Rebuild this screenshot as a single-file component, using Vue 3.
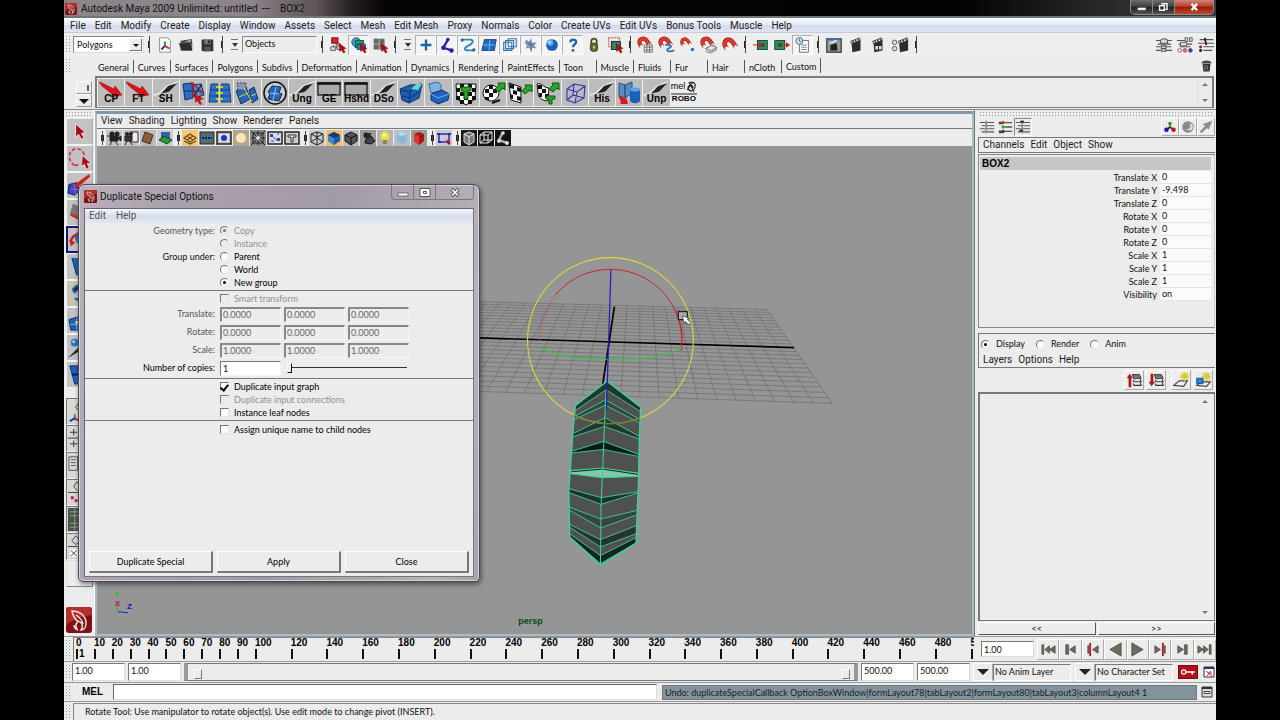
<script setup>
import { ref } from 'vue'

const menus = ['File', 'Edit', 'Modify', 'Create', 'Display', 'Window', 'Assets', 'Select', 'Mesh', 'Edit Mesh', 'Proxy', 'Normals', 'Color', 'Create UVs', 'Edit UVs', 'Bonus Tools', 'Muscle', 'Help']
const shelfTabs = ['General', 'Curves', 'Surfaces', 'Polygons', 'Subdivs', 'Deformation', 'Animation', 'Dynamics', 'Rendering', 'PaintEffects', 'Toon', 'Muscle', 'Fluids', 'Fur', 'Hair', 'nCloth', 'Custom']
const panelMenus = ['View', 'Shading', 'Lighting', 'Show', 'Renderer', 'Panels']
const channelMenus = ['Channels', 'Edit', 'Object', 'Show']
const layerMenus = ['Layers', 'Options', 'Help']

const arrow = '<path d="M11 8l8 6-3 .5 2 3.500-2 1-2-3.500-2 2z" fill="#b00c12" stroke="#7a0000" stroke-width=".4"/>'
const magnet = '<path d="M5 12C1 7 3 3.500 6 3C9.500 2.500 11 5 14.500 10.500" fill="none" stroke="#8a120a" stroke-width="4.600"/><path d="M5 12C1 7 3 3.500 6 3C9.500 2.500 11 5 14.500 10.500" fill="none" stroke="#dc3a26" stroke-width="3.400"/><path d="M5.500 12.500L4 10.300M14.700 11L13.300 8.800" stroke="#f0f0f0" stroke-width="3.400"/>'
const clapper = '<path d="M5 8l10-3v11l-9 2z" fill="#2b2b2b"/><path d="M4 6l10-4 1 3L5 8.500z" fill="#eee" stroke="#222" stroke-width=".8"/><path d="M6 5l1.500 2.500M9 4l1.500 2.500M12 3l1.500 2.500" stroke="#222" stroke-width="1.300"/>'
const pageBend = '<path d="M1 16C9 14 13 8 15 6c3-2 6-3 10-3-5 3-6 7-10 9-3 1-7 0-14 4z" fill="#222"/><path d="M0 14C8 14 10 7 15 5l10-4v2L15 6C11 9 9 15 1 16z" fill="#e4e4e4"/>'
const boxFrame = '<rect x="2" y="3" width="22" height="12" fill="#a9a9a9" stroke="#111" stroke-width="1.200"/><path d="M1.300 3.500h23.400" stroke="#111" stroke-width="2.500"/>'
const redArrow = '<path d="M1 2l3 1 12 6 1-3 7 9-11 2 1-3L4 6z" fill="#e01018" stroke="#8c0006" stroke-width=".5"/>'
const checker = (x, y, n, s) => {
  let d = ''
  for (let r = 0; r < n; r++) for (let c = 0; c < n; c++) if ((r + c) % 2) d += `M${x + c * s} ${y + r * s}h${s}v${s}h-${s}z`
  return d
}
const logo = '<rect width="26" height="26" rx="3" fill="#7d1114"/><path d="M0 3a3 3 0 0 1 3-3h20a3 3 0 0 1 3 3v5C16 9 8 12 0 18z" fill="#b0302c"/><path d="M6 4c9 0 14 6 14 12 0 4-2 7-5 7 3-4 1-8-3-9-3-1-5-5-6-10zM10 8c3 2 6 4 7 9M12 15c-2 1-3 3-1 7M8 18c0 2 1 4 4 5" fill="none" stroke="#f2dede" stroke-width="1.500"/>'

const status = {
  newScene: '<path d="M4 2h9l3 3v13H4z" fill="#fff" stroke="#888"/><path d="M10 11V6" stroke="#1ca01c" stroke-width="2"/><path d="M10 11l-4 4" stroke="#2222d0" stroke-width="2"/><path d="M10 11l5 3" stroke="#d02020" stroke-width="2"/>',
  open: '<path d="M4 16V6l5-1 1 1h7v10z" fill="#555"/><path d="M2 8l12 0 3 8H5z" fill="#2e2e2e"/><path d="M4 6l12-2v3" fill="none" stroke="#222"/>',
  save: '<path d="M4 4h13v13H5l-1-1z" fill="#333"/><path d="M7 4h7v5H7z" fill="#777"/><path d="M7 12h7v5H7z" fill="#555"/><path d="M11 5h2v3h-2z" fill="#222"/>',
  hier: '<path d="M8 6v8M8 9h5M5 10v5" stroke="#555" fill="none"/><rect x="3" y="2" width="7" height="6" fill="#d22" stroke="#611"/><rect x="2" y="12" width="5" height="4" fill="#ddd" stroke="#555"/><rect x="9" y="11" width="5" height="4" fill="#ddd" stroke="#555"/>' + arrow,
  obj: '<circle cx="7" cy="7" r="5" fill="#3c9ad6" stroke="#174e84"/><rect x="6" y="5" width="9" height="8" fill="#20a050" stroke="#0b5e35"/><path d="M8 9h9v6H8z" fill="#2d80d0" stroke="#123f80"/>' + arrow,
  comp: '<rect x="3" y="3" width="12" height="12" fill="#666"/><path d="M9 3v12M3 9h12" stroke="#b9b9b9"/><rect x="10" y="9.500" width="4.500" height="5" fill="#3a8a4a"/>' + arrow,
  plus: '<path d="M10 4v12M4 10h12" stroke="#1c64a8" stroke-width="2.600"/>',
  joint: '<path d="M11 4L6 13l9 3" fill="none" stroke="#2522a0" stroke-width="2.500"/><circle cx="11" cy="4" r="2" fill="#2522a0"/><circle cx="6" cy="13" r="2.500" fill="#2522a0"/><circle cx="15" cy="16" r="2.500" fill="#2522a0"/>',
  curve: '<path d="M3 4h9c6 0 3 5-2 7-4 2-6 5 1 5h6" fill="none" stroke="#3a82b8" stroke-width="2"/><path d="M2 3h3v3H2zM15 14h3v3h-3z" fill="#1f5c94"/>',
  surf: '<path d="M5 4h13l-2 12H2z" fill="#1e6cc0" stroke="#10407c"/><path d="M11 4l-1 12M3.500 10H17" stroke="#7db8ee"/>',
  lattice: '<path d="M3 7h9v9H3zM8 3h9v9H8zM5 5h9v9H5z" fill="none" stroke="#2f76b4" stroke-width="1.200"/>',
  part: '<path d="M5 4l2 3 3-3 1 4 5-2-3 4 3 3-5 0v5l-3-5-4 1 2-4-3-3z" fill="#7897b8"/><path d="M10 3v14M4 9h12M6 5l8 9" stroke="#47668c" stroke-width=".8"/>',
  ball: '<circle cx="10" cy="10" r="6.500" fill="#1560b4"/><circle cx="8" cy="7.500" r="3.500" fill="#58a6ee"/><circle cx="7.500" cy="7" r="1.500" fill="#c4e2ff"/>',
  ques: '<path d="M7 7c0-4 7-4 6.500 0C13 9.500 10 9 10 12.500" fill="none" stroke="#1c64a8" stroke-width="2.500"/><circle cx="10" cy="16" r="1.600" fill="#1c64a8"/>',
  lock: '<path d="M7 9V6c0-4 6-4 6 0v3" fill="none" stroke="#4a4a20" stroke-width="2"/><rect x="6" y="8" width="8" height="9" rx="3" fill="#6d6b2e" stroke="#2e2d10"/><path d="M10 11v3" stroke="#eee" stroke-width="1.500"/>',
  hilite: '<rect x="3" y="2" width="12" height="10" fill="none" stroke="#d22" stroke-dasharray="2 1"/><rect x="6" y="6" width="10" height="9" fill="#2d8a4a" stroke="#112244"/><path d="M9 8h5v4H9z" fill="#3a80c0"/>' + arrow,
  mgrid: magnet + '<path d="M8 10h9v8H8zM11 10v8M14 10v8M8 12.500h9M8 15.500h9" fill="#eee" stroke="#555" stroke-width=".8"/>',
  mcurve: magnet + '<path d="M8 10c9-1 7 3 3 4-3 3 2 4 7 2" fill="none" stroke="#2a76bd" stroke-width="2"/>',
  mpoint: '<g transform="translate(1 1) scale(.8)">' + magnet + '</g><circle cx="15" cy="15" r="2" fill="#2a76bd"/>',
  mplane: magnet + '<path d="M6 14l7-4 6 3-7 4z" fill="#ddd" stroke="#555"/><path d="M6 17l6 2 7-4" fill="none" stroke="#777"/>',
  mlive: '<g transform="translate(1 1) scale(1.1)">' + magnet + '</g>',
  inp: '<rect x="6" y="5" width="11" height="10" fill="#2c9257" stroke="#12402a"/><path d="M9 8h5v4H9z" fill="#444"/><path d="M1 10h9M8 8l3 2-3 2z" stroke="#c8202a" fill="#c8202a" stroke-width="1.200"/>',
  outp: '<rect x="2" y="5" width="11" height="10" fill="#2c9257" stroke="#12402a"/><path d="M5 8h5v4H5z" fill="#444"/><path d="M9 10h8M15 8l3 2-3 2z" stroke="#c8202a" fill="#c8202a" stroke-width="1.200"/>',
  hist: '<path d="M8 5h8v13H6v-9" fill="#fff" stroke="#666"/><path d="M8 10h6M8 12.500h6M8 15h6" stroke="#777"/><circle cx="6" cy="5.500" r="3.800" fill="#d8ecfa" stroke="#2a5f92"/><path d="M6 3v3h2" fill="none" stroke="#2a5f92"/>',
  rview: '<rect x="2" y="3" width="16" height="15" fill="#9a9a9a" stroke="#444" stroke-width="1.500"/><path d="M2 3.500h16" stroke="#3d6fa8" stroke-width="2.500"/><path d="M6 10l7-2 1 8H6z" fill="#222"/><path d="M5 8l8-3" stroke="#eee" stroke-width="1.500"/>',
  render: clapper,
  ipr: clapper + '<path d="M7 11h3v4H7zM11 11h3v4h-3z" fill="#ddd"/>',
  rset: '<g transform="translate(4 0)">' + clapper + '</g><circle cx="4" cy="7" r="2.500" fill="#ddd" stroke="#555"/><circle cx="4" cy="14" r="2.500" fill="#ddd" stroke="#555"/>',
  sl1: '<path d="M1 5h5M13 5h6M3 9h15M1 12h5M12 12h6M1 16h5M12 16h7" stroke="#555" stroke-width="1.200"/><path d="M6 8V6c0-4 8-4 8 0v2zM7 11h5v6H7zM7 14h5" fill="#ddd" stroke="#555" stroke-width="1.200"/>',
  sl2: '<path d="M1 5h11M3 9h15M4 12h12" stroke="#555" stroke-width="1.200"/><path d="M10 2h3v4h-3zM15 2h3v4h-3zM5 7h7v4H5z" fill="#ddd" stroke="#555"/><circle cx="4" cy="16" r="2" fill="#fff" stroke="#c33"/><circle cx="10" cy="16" r="2" fill="#d77" stroke="#955"/><circle cx="16" cy="16" r="2" fill="#44a" stroke="#336"/>',
  sl3: '<path d="M3 4h15M1 8h8M11 8h8M7 12h12M7 16h10" stroke="#555" stroke-width="1.200"/><path d="M9 2v4M10 6v4" stroke="#222" stroke-width="2"/><circle cx="4" cy="12" r="1.700" fill="#a22"/><circle cx="4" cy="16" r="1.700" fill="#226"/>',
}
const files = ['newScene', 'open', 'save']
const selModes = ['hier', 'obj', 'comp']
const masks = ['plus', 'joint', 'curve', 'surf', 'lattice', 'part', 'ball', 'ques']
const snaps = ['mgrid', 'mcurve', 'mpoint', 'mplane', 'mlive']
const hists = ['inp', 'outp', 'hist']
const renders = ['rview', 'render', 'ipr', 'rset']
const sliders = ['sl1', 'sl2', 'sl3']

const shelf = [
  { g: redArrow, t: 'CP' },
  { g: redArrow, t: 'FT' },
  { g: pageBend, t: 'SH' },
  { g: '<path d="M3 4l9-1 1 15-8 2z" fill="#2a6fc4" stroke="#0d2f6b"/><path d="M13 5l8-1 3 11-9 3z" fill="#5793cc" stroke="#0d2f6b"/><path d="M4 11h19" stroke="#0d2f6b"/><path d="M12 2l1 15M13 3l9 11" stroke="#c11" stroke-width="1.300"/><path d="M22 4l-8 12" stroke="#123" stroke-width="1.200"/><path d="M15 14l9 5-4 1 2 4-2 1-3-4-2 2z" fill="#c8171e"/>' },
  { g: '<path d="M4 4h7l-1 18H2zM14 4h8l2 18H14z" fill="#2d74c8" stroke="#12427f"/><path d="M3 10h20M3 16h20" stroke="#0e3a78"/><path d="M12.500 3v20M9 7h7M9 13h7M9 19h7" stroke="#e8e44a" stroke-width="1.500"/>' },
  { g: '<path d="M2 11l10-4 4 12-9 5z" fill="#2465b8" stroke="#0d2f6b"/><path d="M15 10l5-3 4 12-6 4z" fill="#2465b8" stroke="#0d2f6b"/><path d="M3 3h9v7H4z" fill="#8d98b8" stroke="#445" stroke-dasharray="2 1"/><path d="M5 17l9-4M17 16l5-2M10 8l8 14" stroke="#d8d84a"/>' },
  { g: '<circle cx="13" cy="13" r="11" fill="#c9c9c9" stroke="#111" stroke-width="1.500"/><path d="M10 6l9 1-2 6 3 1-3 7-11-2 2-6-2-1z" fill="#2465b8" stroke="#0d2f6b"/><path d="M8 13l9 1M14 7l-3 13" stroke="#9cc4f0"/>' },
  { g: pageBend, t: 'Ung' },
  { g: boxFrame, t: 'GE' },
  { g: boxFrame, t: 'Hshd' },
  { g: pageBend, t: 'DSo' },
  { g: '<path d="M2 9l10-4 12-1-3 14-10 5-7-3z" fill="#1f5db4" stroke="#0d2f6b"/><path d="M3 10l9 2 4-6M11 23l1-11M4 16l8 2 9-6" fill="none" stroke="#0d2f6b"/><path d="M13 9l5-5 6 0-4 6z" fill="#65d6ca"/>' },
  { g: '<path d="M4 4l9-2 3 3v6l-10 2z" fill="#7fb1e2" stroke="#3a6aa4"/><path d="M6 14l11-4 7 4-1 6-10 4-7-4z" fill="#1f62c0" stroke="#0d2f6b"/><path d="M6 14l7 4 11-4" fill="none" stroke="#77aef0"/>' },
  { g: '<path d="M3 4h20l-1 15-9 6-9-6z" fill="#f6f6f6" stroke="#111"/><path d="' + checker(3, 4, 5, 4) + '" fill="#111"/><path d="M8 7h10v4h-3v8h-4v-8H8z" fill="#28a428" stroke="#0b560b"/>' },
  { g: '<circle cx="11" cy="13" r="8" fill="#f6f6f6" stroke="#111"/><path d="M5 9h4v4H5zM9 13h4v4H9zM13 9h4v4h-4zM9 5h4v4H9zM5 17h4v3H5z" fill="#111"/><path d="M15 9l4-4-1-2h7v7l-2-2-4 4z" fill="#28a428" stroke="#0b560b"/><path d="M12 23l8-3" stroke="#111" stroke-width="2"/>' },
  { g: '<path d="M2 3l12 4v16L4 20z" fill="#f6f6f6" stroke="#111"/><path d="M3 4l4 1v4l-4-1zM10 7l4 1v4l-4-1zM6 10l4 1v4l-4-1zM10 16l4 1v4l-4-1zM3 14l3 1v4l-3-1z" fill="#111"/><path d="M15 11l4-4-1-2h7v7l-2-2-5 4z" fill="#28a428" stroke="#0b560b"/>' },
  { g: '<path d="M3 4c5-2 6 4 12 4l-1 13C8 21 4 17 4 13z" fill="#f6f6f6" stroke="#111"/><path d="M4 5h4v4H4zM8 9h4v4H8zM5 13h3v4H5zM11 14h3v4h-3z" fill="#111"/><path d="M15 9l4-4-1-2h7v7l-2-2-4 4zM12 16h9v3h-3v5h-3v-5h-3z" fill="#28a428" stroke="#0b560b"/>' },
  { g: '<path d="M5 9l7-5 11 2-1 12-9 5-8-3zM5 9l10 3 8-6M15 12l-2 11M12 4l-1 11 11 3M11 15l-6 5" fill="none" stroke="#3334b4" stroke-width="1.100"/>' },
  { g: pageBend, t: 'His' },
  { g: '<path d="M3 3l6 2v13l-6-2zM9 5l7-3v11l-7 5z" fill="#5b8cc4" stroke="#24508a"/><path d="M14 9h10v12c-2 3-8 3-10 0z" fill="#1b5fb8"/><ellipse cx="19" cy="9.500" rx="5" ry="2" fill="#5aa0ea"/><path d="M2 15l7 4 1-2 2 7-8 0 1-2z" fill="#d8161c"/>' },
  { g: pageBend, t: 'Unp' },
  { g: '<path d="M18 4c3-4 7-1 6 3-1 5-6 5-7 1 0-3 5-4 5 0M18 2l5 10M16 10l6-8M0 14h26" fill="none" stroke="#222" stroke-width="1.100"/>', t: 'ROBO', top: 'mel' },
]

const panelIcons = [
  'sep',
  '<rect width="16" height="16" fill="#c4c4c4"/><circle cx="6" cy="4" r="2.500" fill="#222"/><circle cx="11" cy="4" r="2.500" fill="#222"/><path d="M4 6h8v5H4zM12 8l3-2v5zM6 11l-2 4M9 11l3 4M1 6h3" stroke="#222" fill="#222"/>',
  '<rect width="16" height="16" fill="#c4c4c4"/><path d="M7 2h8v10H7z" fill="#eee" stroke="#333"/><path d="M2 6h7v5H2zM4 11l-2 4M7 11l2 4" stroke="#222" fill="#333"/><circle cx="4" cy="4" r="2" fill="#222"/><circle cx="8" cy="4" r="2" fill="#222"/>',
  '<rect width="16" height="16" fill="#bbb"/><path d="M5 2l8 3-3 9-8-3z" fill="#8a6038" stroke="#4a3018"/>',
  '<rect width="16" height="16" fill="#ccc"/><path d="M4 2h9v7H4z" fill="#3a5fb0"/><path d="M2 10l5-4 8 4-5 4z" fill="#2a9a3a" stroke="#0b4a14"/>',
  'sep',
  '<rect width="16" height="16" fill="#f4c878"/><path d="M2 8l6-4 6 4-6 4zM5 6l6 4M11 6l-6 4M2 11l6 3 6-3" fill="none" stroke="#6a4310" stroke-width="1.200"/>',
  '<rect x="1" y="2" width="14" height="12" fill="#666" stroke="#222"/><path d="M2 5h12v6H2z" fill="#3a7290"/><path d="M3 8h10" stroke="#123" stroke-dasharray="2 1" stroke-width="2"/>',
  '<rect x="1" y="2" width="14" height="12" fill="#bbb" stroke="#222" stroke-width="1.500"/><path d="M3 4h10v8H3z" fill="#dcdce8"/><circle cx="8" cy="8" r="3" fill="#2036c0"/>',
  '<rect width="16" height="16" fill="#b3a48c"/><circle cx="8" cy="8" r="5" fill="#f8e6ba"/>',
  '<rect width="16" height="16" fill="#8a8a8a"/><path d="M1 1l14 14M15 1L1 15M8 1v14M1 8h14M3 3h10v10H3z" stroke="#222" fill="none"/><circle cx="8" cy="8" r="2" fill="#ddd"/>',
  '<rect x="1" y="2" width="14" height="12" fill="#ddd" stroke="#222" stroke-width="1.500"/><path d="M3 4h3v3H3zM10 8h3v3h-3z" fill="#2a4ab0"/><path d="M6 7l5 4M10 4h2M4 11h3" stroke="#2a4ab0"/>',
  '<rect x="1" y="2" width="14" height="12" fill="#ccc" stroke="#222" stroke-width="1.500"/><path d="M4 5h8v2H9v5H7V7H4z" fill="#eee" stroke="#333"/>',
  'sep',
  '<rect width="16" height="16" fill="#ccc"/><path d="M2 4l6-2 6 2v8l-6 3-6-3zM2 4l6 3 6-3M8 7v8M8 2v6l-6 4M8 8l6 4" fill="none" stroke="#222"/>',
  '<rect width="16" height="16" fill="#f0be6a"/><path d="M2 5l6-3 6 3v6l-6 4-6-4z" fill="#1d5ca8"/><path d="M2 5l6 3v7l-6-4z" fill="#3f86d2"/><path d="M2 5l6-3 6 3-6 3z" fill="#123c74"/>',
  '<rect width="16" height="16" fill="#bbb"/><path d="M2 5l6-3 6 3v6l-6 4-6-4z" fill="#555" stroke="#111"/><path d="M2 5l6 3 6-3M8 8v7" stroke="#111" fill="none"/>',
  '<rect width="16" height="16" fill="#999"/><path d="M4 3h7v5H4z" fill="#333"/><circle cx="6" cy="5" r="2.500" fill="#222"/><path d="M6 9l5-3 4 5-4 3-6-1z" fill="#444" stroke="#111"/>',
  '<rect width="16" height="16" fill="#b4b4b4"/><circle cx="8" cy="6" r="4.500" fill="#e6e040"/><circle cx="7" cy="5" r="1.500" fill="#fff"/><path d="M6 10h4v4H6z" fill="#8a8a3a"/>',
  '<rect width="16" height="16" fill="#b8c0c6"/><path d="M3 4l5-2 5 2v7l-5 3-5-3z" fill="#86bad8"/><path d="M3 4l5 2 5-2-5-2z" fill="#b6dcf0"/>',
  '<rect width="16" height="16" fill="#999"/><path d="M3 4l5-2 5 2v7l-5 4-5-4z" fill="#b01414"/><path d="M3 4l5 2v9l-5-4z" fill="#d83a30"/>',
  'sep',
  '<rect width="16" height="16" fill="#ccc"/><path d="M3 4h10v8H3z" fill="none" stroke="#2a2ac0" stroke-width="1.500"/><path d="M1 3h3v2H1zM12 3h3v2h-3zM2 11h3v2H2z" fill="#2a2ac0"/><path d="M10 9l5 4-3 2z" fill="#a11"/>',
  'sep',
  '<rect width="16" height="16" fill="#1a1a1a"/><path d="M3 4l5-2 5 2v8l-5 3-5-3z" fill="#777" stroke="#ddd"/><path d="M3 4l5 3 5-3M8 7v8" stroke="#ddd" fill="none"/>',
  '<rect width="16" height="16" fill="#111"/><path d="M2 5h8v8H2zM6 2h8v8H6zM2 5l4-3M10 5l4-3M10 13l4-3M2 13l4-3" fill="none" stroke="#eee"/>',
  '<rect width="16" height="16" fill="#111"/><path d="M8 2L4 10l8 3" fill="none" stroke="#aaa" stroke-width="2.500"/><circle cx="8" cy="3" r="1.800" fill="#ddd"/><circle cx="4" cy="11" r="2" fill="#ddd"/><circle cx="12" cy="13" r="2" fill="#ddd"/>',
]

const tools = [
  '<path d="M9 5l10 9-4 1 3 5-3 1-3-5-3 3z" fill="#a80c14" stroke="#fff" stroke-width=".8"/>',
  '<path d="M8 20C0 16 1 3 10 3c8 0 9 8 7 11M8 20l6 0" fill="none" stroke="#d63a5a" stroke-width="1.800" stroke-dasharray="4 2"/><path d="M16 10l9 8-4 0 2 5-3 1-2-5-3 2z" fill="#a80c14" stroke="#fff" stroke-width=".6"/>',
  '<path d="M2 12l8-2 3 8-5 5-7-2z" fill="#2a4cc4" stroke="#102060"/><path d="M4 17h8M7 11l2 11" stroke="#d04ad0"/><path d="M8 12l15-11 1 3-13 11z" fill="#d22018"/>',
  '<path d="M6 4l10 4-5 10-8-3z" fill="#777"/><path d="M4 15l16 8" stroke="#d02a20" stroke-width="3"/>',
  '<circle cx="15" cy="10" r="8" fill="#2076c4"/><path d="M3 14c1-5 4-7 7-7" fill="none" stroke="#d22018" stroke-width="2.500"/><path d="M1 12l7 3-5 4z" fill="#d22018"/>',
  '<path d="M5 4l16 1-3 18-8-1z" fill="#1d62ae"/><path d="M5 4l5 18" stroke="#0c2f66"/>',
  '<path d="M3 3h20v20H3z" fill="none" stroke="#e2d24a" stroke-dasharray="2 4" stroke-width="2"/><path d="M6 9c4-6 9-5 10-4l-8 7zM8 18c4 3 8 3 10 0" fill="#222" stroke="#2a5cb0" stroke-width="2"/>',
  '<path d="M2 12l10-3 12 3v11H4z" fill="#1f5fc0" stroke="#0d2f6b"/><path d="M10 10v13M3 17h20" stroke="#7db4f0"/><circle cx="10" cy="15" r="1.500" fill="#ee4"/>',
  '<circle cx="8" cy="8" r="4" fill="#2478c4"/><circle cx="7" cy="7" r="1.500" fill="#9fd0f8"/><path d="M1 24L14 11l3 5-6 2z" fill="#222"/>',
  '<path d="M3 4h18l-2 18-11 1z" fill="#1f5fc0" stroke="#0d2f6b"/><path d="M12 4l1 19M5 13h15" stroke="#081f4c" stroke-width="2"/>',
]
const layouts = [
  '<path d="M12 4l5 4-3 6-5-5z" fill="none" stroke="#444"/><path d="M8 22v-6" stroke="#2a2" stroke-width="2"/><path d="M8 20l-5 3" stroke="#22c" stroke-width="2"/><path d="M8 20l5 3" stroke="#c22" stroke-width="2"/>',
  '<path d="M1 12.500h24M3 6.500h8M7 3v7M3 18.500h8M7 15v7" stroke="#333"/>',
  '<path d="M2 4h9v14H2zM4 7h5M4 10h5M4 13h5M13 4v17" fill="none" stroke="#555"/>',
  '<path d="M1 13h24M10 2l6 5-5 4-4-4z" fill="none" stroke="#444"/><path d="M3 16h8v8H3z" fill="#cdd4e8"/><path d="M4 17h3v3H4zM8 20h3v3H8z" fill="#c22"/>',
  '<rect x="1" y="1" width="24" height="24" fill="#4a544c"/><path d="M3 5h20M3 9h20M3 17h20M3 21h20M8 2v22M14 2v22" stroke="#91a394"/>',
  '<path d="M1 13h24M9 2l5 5-5 4-4-4z" fill="none" stroke="#444"/><path d="M3 16h8v8H3z" fill="#fff"/><path d="M4 23l6-6" stroke="#c22"/><path d="M4 17l6 6" stroke="#22c"/>',
]

const rowLines = '<path d="M1 4h6M9 4h8M3 7.500h4M9 7.500h8M1 11h6M9 11h8M3 14.500h4M9 14.500h8M8 2v14" stroke="#555" stroke-width="1.200"/>'
const channelIcons = [
  rowLines,
  '<path d="M9 4h8M9 9h8M9 14h8" stroke="#555" stroke-width="1.500"/><path d="M2 3h4v3H2zM2 13h4v3H2z" fill="#444"/><circle cx="7" cy="4" r="1.800" fill="#a33"/><circle cx="7" cy="9" r="2" fill="#3a3"/><circle cx="7" cy="14" r="1.800" fill="#333"/>',
  rowLines + '<path d="M6 3h4M5 13h4" stroke="#222" stroke-width="2"/>',
]
const channelTools = [
  '<path d="M9 9V5" stroke="#2a2" stroke-width="2"/><circle cx="9" cy="5" r="2" fill="#1a9a1a"/><path d="M9 9l-4 3" stroke="#1414c0" stroke-width="2"/><path d="M9 9l4 3" stroke="#c01414" stroke-width="2"/><circle cx="5" cy="12" r="2.500" fill="#1414c0"/><circle cx="13" cy="12" r="2.500" fill="#c01414"/>',
  '<circle cx="9" cy="9" r="6.500" fill="#888"/><circle cx="10.500" cy="9" r="4" fill="#ddd"/><circle cx="8" cy="8" r="3.500" fill="#888"/>',
  '<path d="M16 2l-4 10-2-2-6 6-2-2 6-6-3-2z" fill="#8c8c8c"/>',
]
const star = '<path d="M14 1v10M9 6h10M10.500 2.500l7 7M17.500 2.500l-7 7" stroke="#d8cc30" stroke-width="1.800"/>'
const stack = '<path d="M8 4l8 0 2 4-8 1z" fill="#777" stroke="#333"/><path d="M9 10l1 2h8l-1-3M9 14l1 2h8l-1-3" fill="#eee" stroke="#333" stroke-width="1.200"/>'
const layerIcons = [
  stack + '<path d="M4 18V8H2l3-5 4 5H7v10z" fill="#a81818"/>',
  stack + '<path d="M4 3v9H2l3 5 4-5H7V3z" fill="#a81818"/>',
  '<path d="M2 16l6-5h9l-4 6z" fill="#eee" stroke="#444" stroke-width="1.300"/>' + star,
  '<path d="M3 16l5-4h10l-4 5z" fill="#eee" stroke="#444" stroke-width="1.300"/>' + star + '<path d="M3 8h7v6H3z" fill="#2b7ed2" stroke="#124a8c"/>',
]
const channels = [['Translate X', '0'], ['Translate Y', '-9.498'], ['Translate Z', '0'], ['Rotate X', '0'], ['Rotate Y', '0'], ['Rotate Z', '0'], ['Scale X', '1'], ['Scale Y', '1'], ['Scale Z', '1'], ['Visibility', 'on']]

const tri = 'fill="#6a6a5e" stroke="#33332c" stroke-width=".6"'
const playback = [
  ['Go to start', `<path d="M3 5h2v10H3zM11 6v8l-5-4zM17 6v8l-6-4z" ${tri}/>`],
  ['Step back frame', `<path d="M5 5h3v10H5zM15 6v8l-6-4z" ${tri}/>`],
  ['Step back key', `<path d="M16 6v8l-6-4zM5 6h1v8H5z" ${tri}/><path d="M7.500 3v14" stroke="#b81c1c" stroke-width="2"/>`],
  ['Play backwards', `<path d="M16 3v14L4 10z" ${tri}/>`],
  ['Play forwards', `<path d="M4 3v14l12-7z" ${tri}/>`],
  ['Step forward key', `<path d="M4 6v8l6-4zM14 6h1v8h-1z" ${tri}/><path d="M12.500 3v14" stroke="#b81c1c" stroke-width="2"/>`],
  ['Step forward frame', `<path d="M12 5h3v10h-3zM5 6v8l6-4z" ${tri}/>`],
  ['Go to end', `<path d="M15 5h2v10h-2zM9 6v8l5-4zM3 6v8l6-4z" ${tri}/>`],
]

const frames = []
for (let v = 0; v < 100; v += 10) frames.push({ v, span: 10 })
for (let v = 100; v < 500; v += 20) frames.push({ v, span: 20 })
frames.push({ v: 500, span: 2 })

/* Ground plane in perspective: 24 x 24 cells */
const gridLines = []
const far = (i) => [615 + 12.75 * i, 304.8 + 0.354 * i]
const near = (i) => [602 + 19.25 * i, 395.1 + 0.654 * i]
const mix = (a, b, f) => [a[0] + (b[0] - a[0]) * f, a[1] + (b[1] - a[1]) * f]
for (let i = -12; i <= 12; i++) if (i !== 0) gridLines.push([far(i), near(i)])
for (let j = 0; j <= 24; j++) {
  const u = j / 24
  const f = u / (u + 1.465 * (1 - u))
  if (j !== 12) gridLines.push([mix(far(-12), near(-12), f), mix(far(12), near(12), f)])
}
const gridPath = gridLines.map(([a, b]) => `M${a[0].toFixed(1)} ${a[1].toFixed(1)}L${b[0].toFixed(1)} ${b[1].toFixed(1)}`).join('')

/* Edge loops of the box: left, centre and right vertices */
const loops = [
  [228, 465, 323, 392, 424, 470], [228, 480, 320, 418, 424, 484], [225, 498, 318, 448, 423, 508], [223, 508, 318, 464, 422, 518],
  [220, 550, 317, 502, 421, 558], [218, 560, 315, 528, 420, 566], [216, 603, 312, 573, 418, 612], [215, 608, 312, 597, 418, 618],
  [213, 660, 310, 653, 417, 668], [213, 670, 308, 682, 416, 678], [209, 715, 305, 742, 416, 724], [209, 727, 305, 762, 415, 728],
  [208, 770, 304, 806, 414, 780], [208, 778, 304, 833, 412, 794], [210, 822, 303, 868, 411, 826], [210, 830, 303, 890, 411, 850],
  [210, 850, 303, 916, 410, 862], [211, 860, 303, 940, 410, 878],
]
const loopPath = loops.map((l) => `M${l[0]} ${l[1]}L${l[2]} ${l[3]}L${l[4]} ${l[5]}`).join('')
const band = (a, b) => `M${a[0]} ${a[1]}L${a[2]} ${a[3]}L${a[4]} ${a[5]}L${b[4]} ${b[5]}L${b[2]} ${b[3]}L${b[0]} ${b[1]}Z`

const geometry = ref('copy')
const group = ref('new')
const layerMode = ref('Display')
const copies = ref(1)
const vectors = [['Translate', '0.0000'], ['Rotate', '0.0000'], ['Scale', '1.0000']]
</script>

<template>
  <div class="screen">
    <div class="app">
      <header class="title">
        <svg class="appicon" viewBox="0 0 26 26" v-html="logo"></svg>
        <span>Autodesk Maya 2009 Unlimited: untitled</span><span>---</span><span class="scn">BOX2</span>
        <div class="winbtns">
          <button aria-label="Minimize"><svg viewBox="0 0 20 14"><path d="M6 7h9v3H6z" fill="#fff" stroke="#444" stroke-width=".5" /></svg></button>
          <button aria-label="Restore"><svg viewBox="0 0 20 14"><path d="M8 3h6v6h-2M6 5h5v5H6z" fill="none" stroke="#fff" stroke-width="1.500" /></svg></button>
          <button class="close" aria-label="Close window"><svg viewBox="0 0 20 14"><path d="M7 3l6 7M13 3l-6 7" stroke="#fff" stroke-width="2.500" /></svg></button>
        </div>
      </header>

      <nav class="menubar"><button v-for="m in menus" :key="m">{{ m }}</button></nav>

      <div class="status">
        <i class="grip"></i>
        <label class="mode"><select aria-label="Menu set"><option>Polygons</option></select><i class="drop"></i></label>
        <i class="sep"></i>
        <button v-for="k in files" :key="k" class="ib" :aria-label="k"><svg viewBox="0 0 20 20" v-html="status[k]"></svg></button>
        <i class="sep"></i><i class="fold"></i>
        <input class="objects" aria-label="Selection mask" value="Objects" readonly />
        <i class="sep"></i>
        <button v-for="k in selModes" :key="k" class="ib" :class="{ down: k === 'obj' }" :aria-label="k"><svg viewBox="0 0 20 20" v-html="status[k]"></svg></button>
        <i class="sep"></i><i class="fold"></i>
        <button v-for="k in masks" :key="k" class="ib down" :aria-label="k"><svg viewBox="0 0 20 20" v-html="status[k]"></svg></button>
        <button v-for="k in ['lock', 'hilite']" :key="k" class="ib" :aria-label="k"><svg viewBox="0 0 20 20" v-html="status[k]"></svg></button>
        <i class="sep"></i>
        <button v-for="k in snaps" :key="k" class="ib" :aria-label="k"><svg viewBox="0 0 20 20" v-html="status[k]"></svg></button>
        <i class="sep"></i>
        <button v-for="k in hists" :key="k" class="ib" :class="{ down: k === 'hist' }" :aria-label="k"><svg viewBox="0 0 20 20" v-html="status[k]"></svg></button>
        <i class="sep"></i>
        <button v-for="k in renders" :key="k" class="ib wide" :aria-label="k"><svg viewBox="0 0 20 20" v-html="status[k]"></svg></button>
        <i class="sep"></i>
        <span class="push"></span>
        <button v-for="k in sliders" :key="k" class="ib" :aria-label="k"><svg viewBox="0 0 20 20" v-html="status[k]"></svg></button>
      </div>

      <div class="tabs">
        <i class="grip"></i>
        <button v-for="t in shelfTabs" :key="t" :class="{ on: t === 'Custom' }">{{ t }}</button>
        <span class="push"></span>
        <svg class="trash" viewBox="0 0 14 16"><path d="M2 5h10l-1 10H3z" fill="#333" /><path d="M1 4c2-3 10-3 12 0z" fill="#555" stroke="#222" /><path d="M5 7v6M8 7v6" stroke="#999" /></svg>
      </div>

      <div class="shelf">
        <div class="shelfside">
          <button aria-label="Shelf tabs"><svg viewBox="0 0 14 10"><path d="M11 2v6" stroke="#333" stroke-width="1.500" /></svg></button>
          <button aria-label="Shelf menu"><svg viewBox="0 0 14 10"><path d="M2 3h10L7 8z" fill="#111" /></svg></button>
        </div>
        <div class="shelfbody">
          <div class="cells">
            <button v-for="(s, i) in shelf" :key="i" :class="{ plain: s.top }" :aria-label="s.t || 'Shelf item ' + (i + 1)">
              <svg viewBox="0 0 26 26" v-html="s.g"></svg>
              <span v-if="s.top" class="top">{{ s.top }}</span><span v-if="s.t" class="cap">{{ s.t }}</span>
            </button>
          </div>
          <div class="updown"><i class="tri up"></i><i class="tri dn"></i></div>
        </div>
      </div>

      <main class="work">
        <aside class="toolbox">
          <i class="hgrip"></i>
          <button v-for="(t, i) in tools" :key="i" :class="{ cur: i === 4 }" :aria-label="'Tool ' + (i + 1)"><svg viewBox="0 0 26 26" v-html="t"></svg></button>
          <div class="layouts">
            <button v-for="(t, i) in layouts" :key="i" :aria-label="'Layout ' + (i + 1)"><svg viewBox="0 0 26 26" v-html="t"></svg></button>
            <button class="blank" aria-label="Layout list"></button>
          </div>
          <span class="push"></span>
          <svg class="biglogo" viewBox="0 0 26 26" v-html="logo"></svg>
        </aside>

        <section class="panel">
          <nav class="pmenu"><button v-for="m in panelMenus" :key="m">{{ m }}</button></nav>
          <div class="pbar">
            <template v-for="(p, i) in panelIcons" :key="i">
              <i v-if="p === 'sep'" class="psep"></i>
              <button v-else :aria-label="'Panel option ' + i"><svg viewBox="0 0 16 16" v-html="p"></svg></button>
            </template>
          </div>
          <svg class="scene" viewBox="97 147 876 485" role="img" aria-label="persp view">
            <path :d="gridPath" fill="none" stroke="#6e6e6e" stroke-width=".7" />
            <path d="M420 335.500L795 347" stroke="#000" stroke-width="1.700" />
            <path d="M615 306L602 393" stroke="#000" stroke-width="1.700" />
            <g transform="translate(500 250) scale(.3333)" stroke-linejoin="round">
              <path d="M323 392L424 470L420 560L417 700L410 878L303 945L211 860L208 720L220 550L228 465Z" fill="#4f514f" />
              <path :d="band(loops[0], loops[1])" fill="#26352f" />
              <path :d="band(loops[2], loops[3])" fill="#38423e" />
              <path :d="band(loops[4], loops[5])" fill="#29332f" />
              <path :d="band(loops[6], loops[7])" fill="#0c1a15" />
              <path :d="band(loops[8], loops[9])" fill="#7fc9a6" />
              <path :d="band(loops[10], loops[11])" fill="#22302b" />
              <path :d="band(loops[12], loops[13])" fill="#3a433f" />
              <path :d="band(loops[14], loops[15])" fill="#28322e" />
              <path :d="band(loops[16], loops[17])" fill="#16221e" />
              <path :d="loopPath" fill="none" stroke="#38d69a" stroke-width="2.600" />
              <path d="M216 664L310 656L416 672" fill="none" stroke="#10231c" stroke-width="3" />
              <path d="M320 420L315 530L310 655L305 760L303 945" fill="none" stroke="#38d69a" stroke-width="3" />
              <path d="M323 392L424 470L420 560L417 700L410 878L303 945L211 860L208 720L220 550L228 465Z" fill="none" stroke="#38d69a" stroke-width="4" />
            </g>
            <circle cx="611" cy="340" r="83" fill="none" stroke="#d6d83c" stroke-width="1.100" />
            <path d="M574 415A83 83 0 0 0 641 417.500" fill="none" stroke="#6b7a34" stroke-width="1.500" />
            <path d="M540 340A72 72 0 0 1 560 290" fill="none" stroke="#b0605f" stroke-width=".8" />
            <path d="M556 294A72 72 0 0 1 676 310" fill="none" stroke="#cc2233" />
            <path d="M676 310A72 72 0 0 1 682 350" fill="none" stroke="#cc2233" stroke-width="1.400" />
            <path d="M539 346C552 354 575 359 612 359C645 359 670 355 683 347" fill="none" stroke="#35c83f" stroke-width="1.100" />
            <path d="M611.500 269L607 410" stroke="#1c1cc4" stroke-width="1.200" />
            <rect x="679" y="311" width="9" height="8" fill="#aaa" stroke="#222" stroke-width="1.200" />
            <path d="M683 315l7 3-2 1 4 4-2 1-4-3-1 2z" fill="#fff" stroke="#222" stroke-width=".6" />
            <path d="M117.500 605v6" stroke="#2a4" /><path d="M118 611.500l10 1" stroke="#2222c0" />
            <text x="114" y="597" class="ax" fill="#18c818">Y</text>
            <text x="115" y="606" class="ax" fill="#d01010">X</text>
            <text x="127" y="609" class="ax" fill="#1010d0">Z</text>
            <text x="531" y="624" text-anchor="middle" class="persp">persp</text>
          </svg>
        </section>

        <aside class="side">
          <i class="hgrip"></i>
          <div class="ctop">
            <button v-for="(c, i) in channelIcons" :key="i" :class="{ down: i === 2 }" :aria-label="'Channel layout ' + (i + 1)"><svg viewBox="0 0 18 18" v-html="c"></svg></button>
            <span class="push"></span>
            <button v-for="(c, i) in channelTools" :key="i" class="raised" :aria-label="'Channel tool ' + (i + 1)"><svg viewBox="0 0 18 18" v-html="c"></svg></button>
          </div>
          <nav class="cmenu"><button v-for="m in channelMenus" :key="m">{{ m }}</button></nav>
          <div class="channels">
            <h2>BOX2</h2>
            <table>
              <tbody>
                <tr v-for="c in channels" :key="c[0]"><th scope="row">{{ c[0] }}</th><td>{{ c[1] }}</td></tr>
              </tbody>
            </table>
          </div>
          <div class="lmode">
            <label v-for="m in ['Display', 'Render', 'Anim']" :key="m"><input v-model="layerMode" type="radio" name="layer" :value="m" />{{ m }}</label>
          </div>
          <nav class="lmenu"><button v-for="m in layerMenus" :key="m">{{ m }}</button></nav>
          <div class="licons"><button v-for="(c, i) in layerIcons" :key="i" :aria-label="'Layer action ' + (i + 1)"><svg viewBox="0 0 20 20" v-html="c"></svg></button></div>
          <div class="layers"><i class="tri up"></i><i class="tri dn"></i></div>
          <div class="pager"><button>&lt;&lt;</button><button>&gt;&gt;</button></div>
        </aside>

        <form class="dialog" @submit.prevent>
          <header>
            <svg viewBox="0 0 26 26" v-html="logo"></svg><span>Duplicate Special Options</span>
            <div class="dbtns">
              <button type="button" aria-label="Minimize dialog"><svg viewBox="0 0 20 14"><path d="M5 7h10v3H5z" fill="#fff" stroke="#555" stroke-width=".8" /></svg></button>
              <button type="button" aria-label="Maximize dialog"><svg viewBox="0 0 20 14"><path d="M5 2.500h10v8H5zM8.500 5.500h3v2h-3z" fill="#fff" stroke="#555" /></svg></button>
              <button type="button" class="x" aria-label="Close dialog"><svg viewBox="0 0 20 14"><path d="M6.500 3l7 7M13.500 3l-7 7" stroke="#555" stroke-width="3.500" /><path d="M7 3.500l6 6M13 3.500l-6 6" stroke="#fff" stroke-width="1.600" /></svg></button>
            </div>
          </header>
          <div class="dbody">
            <nav><button type="button">Edit</button><button type="button">Help</button></nav>
            <div class="sect">
              <div class="row off"><span>Geometry type:</span><label><input v-model="geometry" type="radio" name="geo" value="copy" disabled />Copy</label></div>
              <div class="row off"><span></span><label><input v-model="geometry" type="radio" name="geo" value="inst" disabled />Instance</label></div>
              <div class="row"><span>Group under:</span><label><input v-model="group" type="radio" name="grp" value="parent" />Parent</label></div>
              <div class="row"><span></span><label><input v-model="group" type="radio" name="grp" value="world" />World</label></div>
              <div class="row"><span></span><label><input v-model="group" type="radio" name="grp" value="new" />New group</label></div>
            </div>
            <div class="sect">
              <div class="row off"><span></span><label><input type="checkbox" disabled />Smart transform</label></div>
              <div v-for="v in vectors" :key="v[0]" class="row tall off">
                <span>{{ v[0] }}:</span><input v-for="a in ['X', 'Y', 'Z']" :key="a" class="field" :aria-label="v[0] + ' ' + a" :value="v[1]" disabled />
              </div>
              <div class="row tall">
                <label class="lead" for="copies">Number of copies:</label><input id="copies" v-model="copies" class="field" />
                <input v-model="copies" type="range" min="1" max="100" aria-label="Copies slider" />
              </div>
            </div>
            <div class="sect">
              <div class="row"><span></span><label><input type="checkbox" checked />Duplicate input graph</label></div>
              <div class="row off"><span></span><label><input type="checkbox" disabled />Duplicate input connections</label></div>
              <div class="row"><span></span><label><input type="checkbox" />Instance leaf nodes</label></div>
            </div>
            <div class="sect last">
              <div class="row"><span></span><label><input type="checkbox" />Assign unique name to child nodes</label></div>
            </div>
            <div class="acts"><button type="submit">Duplicate Special</button><button type="button">Apply</button><button type="button">Close</button></div>
          </div>
        </form>
      </main>

      <div class="time">
        <i class="grip"></i>
        <div class="ruler">
          <div v-for="f in frames" :key="f.v" class="tick" :style="{ flexGrow: f.span }"><b>{{ f.v }}</b></div>
          <b class="now">1</b>
        </div>
        <div class="play">
          <input aria-label="Current time" value="1.00" />
          <div class="pbtns"><button v-for="p in playback" :key="p[0]" :aria-label="p[0]"><svg viewBox="0 0 20 20" v-html="p[1]"></svg></button></div>
        </div>
      </div>

      <div class="range">
        <i class="grip"></i>
        <input class="num" aria-label="Animation start" value="1.00" />
        <input class="num" aria-label="Range start" value="1.00" />
        <div class="track"><i></i><i></i></div>
        <input class="num" aria-label="Range end" value="500.00" />
        <input class="num" aria-label="Animation end" value="500.00" />
        <div class="rset">
          <button aria-label="Anim layers"><i class="big"></i></button><input aria-label="Anim layer" value="No Anim Layer" readonly />
          <button aria-label="Character sets"><i class="big"></i></button><input aria-label="Character set" value="No Character Set" readonly />
          <button class="key" aria-label="Auto key"><svg viewBox="0 0 20 14"><circle cx="5" cy="7" r="2.500" fill="none" stroke="#fff" stroke-width="1.500" /><path d="M8 7h10M15 7v3" stroke="#fff" stroke-width="1.800" /></svg></button>
          <button class="sq" aria-label="Preferences"><svg viewBox="0 0 14 14"><path d="M2 2h10v10H2z" fill="#fff" stroke="#334" /><path d="M2 3h10" stroke="#223a66" stroke-width="2" /><path d="M4 6l6 5M9 6l-4 5M6 8h4" stroke="#c33" /></svg></button>
        </div>
      </div>

      <div class="cmd">
        <i class="grip"></i>
        <label for="mel">MEL</label><input id="mel" />
        <output>Undo: duplicateSpecialCallback OptionBoxWindow|formLayout78|tabLayout2|formLayout80|tabLayout3|columnLayout4 1</output>
        <button class="sq" aria-label="Script editor"><svg viewBox="0 0 14 14"><path d="M2 2h10v10H2z" fill="#ddd" stroke="#333" /><path d="M2 3h10" stroke="#234" stroke-width="2" /><path d="M4 6.500h6v2H4z" fill="#fff" stroke="#444" /></svg></button>
      </div>

      <footer class="help"><i class="grip"></i><p>Rotate Tool: Use manipulator to rotate object(s). Use edit mode to change pivot (INSERT).</p></footer>
    </div>
  </div>
</template>

<style>
body { background: #000; }
</style>

<style scoped>
* { box-sizing: border-box; }
.screen { background: #000; padding: 0 5%; min-height: 100vh; display: flex; font: 9px/12px Lato, Roboto, "Liberation Sans", sans-serif; color: #101010; }
.app { flex: 1; min-width: 0; background: #ececec; display: flex; flex-direction: column; }
button { font: inherit; color: inherit; background: none; border: 0; padding: 0; margin: 0; display: block; }
input, select { font: inherit; color: inherit; margin: 0; min-width: 0; border: 0; padding: 0; border-radius: 0; outline: 0; }
svg { display: block; }
i { flex: none; display: block; }
.push { flex: 1; }

.title, .menubar, .pmenu, .cmenu, .lmenu, .dialog header, .dialog nav { font-family: Roboto, "Open Sans", sans-serif; font-size: 10px; color: #1c1c1c; }
.title { height: 18px; display: flex; align-items: center; gap: 4px; padding: 1px 0 0 1px; color: #101010; background: linear-gradient(90deg, #8b8489 0, #8d858b 16%, #5d5457 22%, #241e21 25%, #060304 28%, #050203 78%, #2a2829 90%, #3a3a3a 100%); border-bottom: 2px solid #70777c; }
.title .scn { margin-left: 6px; }
.appicon { width: 12px; height: 12px; }
.winbtns { align-self: flex-start; margin: -1px 2px 0 auto; display: flex; height: 15px; border: 1px solid #8b8b8b; border-top: 0; border-radius: 0 0 5px 5px; overflow: hidden; }
.winbtns button { width: 22px; background: linear-gradient(#6f6f6f, #3a3a3a 50%, #202020 51%, #555); border-right: 1px solid #8b8b8b; }
.winbtns svg { height: 13px; margin: auto; }
.winbtns .close { width: 38px; border: 0; background: linear-gradient(#d0887a, #b5402c 45%, #8f1c0a 50%, #c4482a); }

.menubar { height: 15px; display: flex; gap: 9px; padding: 1px 0 0 6px; align-items: center; background: linear-gradient(#fafbfd, #e6eaf4 45%, #d3dbea 55%, #dfe5f0); border-bottom: 1px solid #c6ccd8; }

.grip { width: 6px; margin: 2px 1px; align-self: stretch; background: radial-gradient(circle, #999 35%, transparent 40%) 0 0 / 3px 3px; }
.hgrip { height: 5px; margin: 1px; background: radial-gradient(circle, #999 35%, transparent 40%) 0 0 / 3px 3px; }
.status { height: 23px; display: flex; align-items: center; background: #eee; }
.mode { position: relative; margin-left: 1px; width: 71px; height: 17px; display: flex; border: 1px solid #888; border-right-color: #ddd; border-bottom-color: #ddd; background: #fff; }
.mode select { flex: 1; appearance: none; background: #fff; padding: 0 3px; }
.drop { position: absolute; right: 1px; top: 1px; bottom: 1px; width: 13px; background: #ececec; border: 1px solid #fff; border-right-color: #777; border-bottom-color: #777; pointer-events: none; }
.drop::after { content: ""; position: absolute; left: 3px; top: 5px; border: 3px solid transparent; border-top-color: #111; }
.sep { width: 10px; height: 17px; background: linear-gradient(#444, #444) center / 1px 100% no-repeat, linear-gradient(#222, #222) center / 2px 7px no-repeat; }
.fold { width: 15px; height: 11px; background: linear-gradient(#777, #777) center top / 7px 1px no-repeat, linear-gradient(#777, #777) center bottom / 7px 1px no-repeat; display: flex; align-items: center; justify-content: center; }
.fold::after { content: ""; border: 3px solid transparent; border-top: 4px solid #333; border-bottom: 0; }
.objects { width: 75px; height: 17px; padding: 0 2px 2px; background: #ececec; border: 1px solid #888; border-right-color: #fff; border-bottom-color: #fff; }
.ib { width: 21px; height: 20px; flex: none; border: 1px solid transparent; }
.ib.wide { width: 22px; }
.ib svg { width: 18px; height: 18px; margin: auto; }
.ib.down { border-color: #b0b0b0 #fff #fff #b0b0b0; background: #f4f4f4; }

.tabs { height: 20px; display: flex; align-items: stretch; }
.tabs .grip { margin-right: 23px; }
.tabs button { min-width: 37px; padding: 2px 4px 0; margin: 4px 0 3px; text-align: left; border-right: 1px solid #555; line-height: 11px; }
.tabs .on { margin: 2px 0 3px; }
.trash { width: 11px; height: 14px; margin: 3px 4px 0 0; }

.shelf { display: flex; height: 33px; }
.shelfside { width: 31px; padding: 5px 0 0 12px; }
.shelfside button { width: 16px; height: 13px; border: 1px solid #fff; border-right-color: #999; border-bottom-color: #999; }
.shelfside svg { width: 14px; height: 10px; }
.shelfbody { flex: 1; display: flex; border: 2px solid #7c7c7c; border-bottom-width: 1px; padding: 1px; margin-right: 2px; margin-bottom: 1px; }
.cells { flex: 0 1 600px; display: grid; grid-template-columns: repeat(22, 1fr); }
.cells button { position: relative; background: #bcbcbc; border: 1px solid #eee; border-width: 0 1px 0 0; overflow: hidden; }
.cells .plain { background: #ececec; }
.cells svg { width: 26px; height: 26px; }
.cells span { position: absolute; left: 0; right: 0; bottom: 2px; text-align: center; font: bold 10px/10px "Liberation Sans", Arial, sans-serif; color: #000; }
.cells .plain span { font-size: 8px; }
.cells .plain .top { bottom: auto; top: 2px; text-align: left; font-size: 9px; font-weight: normal; }
.updown { margin-left: auto; width: 14px; display: flex; flex-direction: column; justify-content: space-between; align-items: center; padding: 4px 0; border-left: 1px solid #e0e0e0; }
.tri { border: 3px solid transparent; }
.tri.up { border-bottom-color: #777; border-top: 0; }
.tri.dn { border-top-color: #777; border-bottom: 0; }

.work { flex: 1; display: flex; position: relative; min-height: 526px; border-top: 1px solid #888; }
.toolbox { width: 31px; display: flex; flex-direction: column; border-right: 1px solid #fff; }
.toolbox button { width: 27px; height: 27px; margin-left: 2px; background: #c2c2c2; border: 1px solid #f2f2f2; border-right-color: #aaa; }
.toolbox .hgrip { margin-bottom: 2px; }
.toolbox svg { width: 25px; height: 25px; }
.toolbox .cur { border: 2px solid #16167a; }
.layouts { margin-top: 10px; }
.layouts button { border: 1px solid #777; border-bottom-color: #eee; background: #d8dad4; }
.toolbox .blank { background: #ececec; border-color: #ddd #888 #888 #ddd; }
.toolbox .biglogo { width: 26px; height: 26px; margin: 0 0 3px 2px; }

.panel { flex: 1; min-width: 0; display: flex; flex-direction: column; border: 2px solid #a7bccb; border-top: 3px solid #8297a8; margin: 1px 0 0; background: #ececec; }
.pmenu, .cmenu, .lmenu { display: flex; align-items: center; gap: 6px; }
.pmenu { height: 15px; padding-left: 4px; border-bottom: 1px solid #777; }
.pbar { height: 17px; display: flex; align-items: center; padding-left: 1px; }
.pbar button { width: 17px; flex: none; }
.pbar svg { width: 16px; height: 16px; }
.psep { width: 8px; height: 14px; background: linear-gradient(#444, #444) center / 1px 100% no-repeat, linear-gradient(#222, #222) center / 3px 6px no-repeat; }
.scene { flex: 1; min-height: 0; width: 100%; background: #959595; }
.ax { font: bold 8px "Liberation Sans", sans-serif; }
.persp { font: bold 9px "Liberation Sans", sans-serif; fill: #0c4a0c; }

.side { width: 242px; padding: 0 1px 0 3px; display: flex; flex-direction: column; border-left: 1px solid #777; }
.ctop { display: flex; height: 20px; align-items: center; }
.ctop button { width: 18px; height: 18px; flex: none; border: 1px solid transparent; }
.ctop .down { border-color: #888 #fff #fff #888; }
.ctop .raised { border-color: #fff #aaa #aaa #fff; }
.ctop svg { width: 16px; height: 16px; }
.cmenu { height: 16px; padding: 0 4px; border-top: 1px solid #777; border-bottom: 1px solid #777; border-left: 1px solid #777; }
.channels { height: 174px; margin-top: 1px; border: 1px solid #888; border-right-color: #ccc; padding: 2px 3px 2px 1px; }
.channels h2 { margin: 0 0 1px; padding-left: 2px; height: 13px; font: bold 10px/13px "Liberation Sans", sans-serif; color: #000; background: #c6c6c6; }
.channels table { width: 100%; border-spacing: 0; }
.channels th { font-weight: normal; text-align: right; padding: 0 3px 0 0; height: 13px; line-height: 12px; }
.channels td { width: 51px; padding: 0 2px; background: #fbfbfb; border-bottom: 1px solid #e4e4e4; line-height: 12px; }
.lmode { margin-top: 5px; height: 20px; display: flex; align-items: center; gap: 11px; border-top: 1px solid #777; border-left: 1px solid #777; padding: 1px 0 0 2px; }
.lmode label { display: flex; align-items: center; gap: 6px; }
.lmenu { height: 15px; padding: 0 4px; border-bottom: 1px solid #777; border-left: 1px solid #777; }
.licons { display: flex; justify-content: flex-end; gap: 2px; padding: 2px 2px 2px 0; }
.licons button { width: 20px; height: 20px; border: 1px solid #fff; border-right-color: #aaa; border-bottom-color: #aaa; }
.licons button:nth-child(3) { margin-left: 3px; }
.licons svg { width: 18px; height: 18px; }
.layers { flex: 1; border: 2px solid #777; border-bottom-width: 1px; border-right-width: 1px; display: flex; flex-direction: column; justify-content: space-between; align-items: flex-end; padding: 6px; }
.pager { display: flex; gap: 2px; height: 13px; margin: 1px 0 1px; }
.pager button { flex: 1; border: 1px solid #fff; border-right-color: #555; border-bottom-color: #555; line-height: 9px; }

input[type="radio"], input[type="checkbox"] { appearance: none; width: 9px; height: 9px; flex: none; background: #fff; border: 1px solid #777; border-right-color: #e4e4e4; border-bottom-color: #e4e4e4; display: grid; place-items: center; }
input[type="radio"] { border-radius: 50%; }
input[type="radio"]:checked::after { content: ""; width: 3px; height: 3px; border-radius: 50%; background: #000; }
input[type="checkbox"]:checked::after { content: ""; width: 3px; height: 6px; border: solid #000; border-width: 0 2px 2px 0; transform: rotate(40deg); }
input:disabled { background: #ececec; }
input[type="radio"]:disabled:checked::after { background: #777; }

.dialog { position: absolute; left: 14px; top: 74px; width: 402px; height: 398px; display: flex; flex-direction: column; padding: 0 5px 4px; border: 1px solid #4c4850; border-radius: 7px 7px 5px 5px; background: linear-gradient(100deg, #b9b0ba, #aba1ad 20%, #a29aa4 55%, #b9b1ba 90%, #aaa2ab); box-shadow: inset 0 0 0 1px #d8d2da, 1px 2px 5px rgba(0, 0, 0, .5); }
.dialog header { height: 23px; flex: none; display: flex; align-items: center; gap: 3px; color: #111; }
.dialog header > svg { width: 13px; height: 13px; }
.dbtns { margin: 0 0 0 auto; align-self: flex-start; display: flex; height: 15px; border: 1px solid #7e7681; border-top: 0; border-radius: 0 0 4px 4px; }
.dbtns button { width: 22px; border-right: 1px solid #7e7681; }
.dbtns .x { width: 37px; border: 0; }
.dbtns svg { height: 14px; margin: 1px auto 0; }
.dbody { flex: 1; background: #ececec; border: 1px solid #666; border-color: #667 #777 #777 #667; display: flex; flex-direction: column; }
.dialog nav { height: 14px; display: flex; gap: 10px; padding-left: 4px; color: #555; background: linear-gradient(#f6f8fc, #d6deec 50%, #e2e8f2); }
.sect { padding: 1px 0; border-bottom: 1px solid #777; }
.sect.last { border: 0; padding-top: 2px; }
.row { height: 13px; display: flex; align-items: center; gap: 3px; }
.row > span, .row .lead { width: 130px; text-align: right; margin-right: 2px; display: block; }
.row label { display: flex; align-items: center; gap: 5px; color: #000; }
.row.off { color: #555; }
.row.off label { color: #909090; }
.row.tall { height: 18px; }
.field { width: 61px; height: 15px; padding: 0 2px; background: #fff; border: 1px solid #777; border-right-color: #f4f4f4; border-bottom-color: #f4f4f4; }
.field:disabled { color: #666; background: #ececec; border-top: 2px solid #888; border-left: 2px solid #888; padding: 0 1px; }
input[type="range"] { appearance: none; width: 120px; height: 14px; background: linear-gradient(#333, #333) 0 6px / 100% 1px no-repeat; margin-left: 3px; }
input[type="range"]::-webkit-slider-thumb { appearance: none; width: 5px; height: 10px; background: #ececec; border: 1px solid #fff; border-right-color: #111; border-bottom-color: #111; }
.acts { margin-top: auto; padding: 0 4px 3px; display: flex; gap: 4px; }
.acts button { flex: 1; height: 22px; color: #000; border: 1px solid #fff; border-right: 2px solid #777; border-bottom: 2px solid #777; }

.time, .range, .cmd, .help { display: flex; align-items: stretch; border-top: 1px solid #999; }
.time { height: 25px; }
.ruler { flex: 1; display: flex; overflow: hidden; position: relative; border-left: 1px solid #777; border-top: 1px solid #888; padding-left: 2px; margin-left: 1px; }
.tick { flex: 1 1 0; min-width: 0; position: relative; background: linear-gradient(#111, #111) 0 100% / 2px 10px no-repeat; height: 21px; }
.ruler b { display: block; font: bold 10px/9px "Liberation Sans", sans-serif; color: #000; white-space: nowrap; }
.ruler .now { position: absolute; left: 5px; top: 11px; }
.play { width: 242px; display: flex; align-items: center; gap: 3px; padding-left: 7px; }
.play input { width: 53px; height: 16px; background: #fff; padding: 0 2px; border: 1px solid #777; border-right-color: #ddd; border-bottom-color: #ddd; }
.pbtns { flex: 1; display: flex; }
.pbtns button { flex: 1; height: 21px; border: 1px solid #fff; border-right-color: #aaa; border-bottom-color: #aaa; }
.pbtns svg { width: 19px; height: 19px; margin: auto; }

.range { height: 21px; gap: 3px; align-items: center; }
.range .grip { margin-right: -2px; }
.num { width: 53px; height: 18px; padding: 0 2px 3px; background: #fff; border: 1px solid #777; border-right-color: #ddd; border-bottom-color: #ddd; }
.track { flex: 1; height: 18px; display: flex; justify-content: space-between; padding: 5px 4px 1px 6px; border: 1px solid #777; border-left: 4px solid #999; border-right: 4px solid #999; }
.track i { width: 8px; border: 1px solid #fff; border-right-color: #777; border-bottom-color: #777; }
.rset { width: 243px; display: flex; align-items: center; }
.rset button { width: 20px; height: 18px; flex: none; display: grid; place-items: center; border: 1px solid #fff; border-right-color: #aaa; }
.big { border: 6px solid transparent; border-top-color: #222; border-bottom: 0; }
.rset input { width: 78px; height: 17px; margin-right: 4px; padding: 0 1px 2px; background: #ececec; border: 1px solid #777; border-right-color: #fff; border-bottom-color: #fff; }
.rset .key { height: 14px; background: #b01018; border: 1px solid #7a0a0e; margin-left: 1px; }
.rset .key svg { width: 18px; height: 12px; }
.rset .sq, .cmd .sq { width: 15px; height: 16px; border: 0; margin-left: 3px; flex: none; align-self: center; }
.sq svg { width: 14px; height: 14px; }

.cmd { height: 19px; align-items: center; }
.cmd label { width: 41px; text-align: center; font: bold 10px/12px "Liberation Sans", sans-serif; color: #000; }
.cmd input { flex: 546; height: 16px; background: #fff; border: 1px solid #666; border-right-color: #ddd; border-bottom-color: #ddd; }
.cmd output { flex: 533; min-width: 0; margin-left: 5px; height: 15px; line-height: 13px; padding: 0 2px; overflow: hidden; white-space: nowrap; color: #14232c; background: #84929a; border: 1px solid #6c7980; }
.cmd .sq { margin-right: 1px; }
.help { height: 19px; }
.help p { flex: 1; margin: 1px 0 0 1px; padding: 2px 0 0 11px; border-top: 1px solid #888; border-left: 1px solid #888; }
</style>
